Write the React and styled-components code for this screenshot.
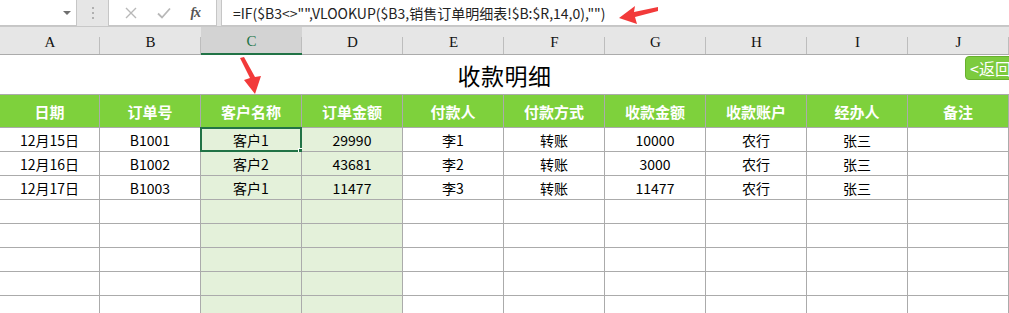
import React from "react";
import styled, { createGlobalStyle } from "styled-components";

const GlobalStyle = createGlobalStyle`
  html, body {
    margin: 0;
    padding: 0;
    background: #ffffff;
  }
  body {
    width: 1009px;
    height: 313px;
    overflow: hidden;
    font-family: "Noto Sans CJK SC", "Noto Sans", sans-serif;
  }
`;

const Page = styled.div`
  position: relative;
  width: 1009px;
  height: 313px;
  overflow: hidden;
`;

const FormulaBar = styled.div`
  display: flex;
  align-items: stretch;
  height: 27px;
  background: #e6e6e6;
  border-bottom: 1px solid #c8c8c8;
  box-sizing: border-box;
`;

const NameBox = styled.div`
  width: 77px;
  background: #fff;
  border: 1px solid #c6c6c6;
  border-left: none;
  border-top: none;
  box-sizing: border-box;
  display: flex;
  align-items: center;
  justify-content: flex-end;
  padding-right: 5px;
`;

const DropArrow = styled.span`
  width: 0;
  height: 0;
  border-left: 4px solid transparent;
  border-right: 4px solid transparent;
  border-top: 4px solid #6f6f6f;
`;

const Grip = styled.div`
  width: 31px;
  display: flex;
  flex-direction: column;
  align-items: center;
  justify-content: center;
  gap: 3px;
  & > i {
    width: 2px;
    height: 2px;
    background: #b0b0b0;
  }
`;

const ButtonBox = styled.div`
  width: 109px;
  background: #fff;
  border: 1px solid #c6c6c6;
  border-top: none;
  box-sizing: border-box;
  display: flex;
  align-items: center;
  justify-content: space-around;
  padding: 0 6px;
`;

const Fx = styled.span`
  font-family: "Liberation Serif", serif;
  font-style: italic;
  font-weight: bold;
  font-size: 14px;
  color: #555;
  letter-spacing: -1px;
`;

const FormulaInput = styled.div`
  flex: 1;
  margin-left: 4px;
  background: #fff;
  border: 1px solid #c6c6c6;
  border-right: none;
  border-top: none;
  box-sizing: border-box;
  display: flex;
  align-items: center;
  padding-left: 11px;
  font-size: 14px;
  color: #222;
  white-space: nowrap;
`;

const ColumnBar = styled.div`
  display: grid;
  grid-template-columns: 100px repeat(9, 101px);
  height: 27px;
  background: #e6e6e6;
  border-bottom: 1px solid #ababab;
  box-sizing: content-box;
`;

const ColLabel = styled.div`
  position: relative;
  display: flex;
  align-items: flex-end;
  justify-content: center;
  padding-bottom: 3px;
  box-sizing: border-box;
  font-family: "Liberation Serif", "DejaVu Serif", serif;
  font-size: 15px;
  color: ${(p) => (p.$active ? "#217346" : "#111")};
  background: ${(p) => (p.$active ? "#d3d3d3" : "transparent")};
  border-bottom: ${(p) => (p.$active ? "2px solid #217346" : "none")};
  margin-bottom: ${(p) => (p.$active ? "-1px" : "0")};
  &::after {
    content: "";
    position: absolute;
    right: 0;
    top: 10px;
    bottom: 0;
    width: 1px;
    background: #bdbdbd;
  }
`;

const TitleRow = styled.div`
  position: relative;
  height: 39px;
  display: flex;
  align-items: center;
  justify-content: center;
  border-bottom: 1px solid #ababab;
`;

const Title = styled.div`
  font-size: 23px;
  color: #000;
  letter-spacing: 0.5px;
`;

const BackButton = styled.div`
  position: absolute;
  left: 965px;
  top: 1px;
  width: 60px;
  height: 24px;
  background: #7ccb3e;
  border: 1px solid #68b02e;
  border-radius: 4px;
  box-sizing: border-box;
  color: #fff;
  font-size: 16px;
  line-height: 22px;
  padding-left: 4px;
  white-space: nowrap;
`;

const Grid = styled.div`
  display: grid;
  grid-template-columns: 100px repeat(9, 101px);
  grid-auto-rows: ${(p) => p.$rowHeight}px;
`;

const HeadCell = styled.div`
  background: #7ed13c;
  color: #fff;
  font-weight: bold;
  font-size: 15px;
  display: flex;
  align-items: center;
  justify-content: center;
  border-right: 1px solid #ababab;
  border-bottom: 1px solid #ababab;
  box-sizing: border-box;
`;

const Cell = styled.div`
  position: relative;
  background: ${(p) => (p.$tinted ? "#e4f1da" : "#fff")};
  color: #000;
  font-size: 14px;
  display: flex;
  align-items: center;
  justify-content: center;
  border-right: 1px solid #ababab;
  border-bottom: 1px solid #ababab;
  box-sizing: border-box;
  ${(p) =>
    p.$selected &&
    `
    &::before {
      content: "";
      position: absolute;
      left: -1px;
      top: -1px;
      right: -1px;
      bottom: -1px;
      border: 2px solid #217346;
      pointer-events: none;
    }
    &::after {
      content: "";
      position: absolute;
      right: -4px;
      bottom: -4px;
      width: 5px;
      height: 5px;
      background: #217346;
      border: 1px solid #fff;
    }
  `}
`;

const Arrow = styled.svg`
  position: absolute;
  left: ${(p) => p.$x}px;
  top: ${(p) => p.$y}px;
`;

const columns = ["A", "B", "C", "D", "E", "F", "G", "H", "I", "J"];
const headers = ["日期", "订单号", "客户名称", "订单金额", "付款人", "付款方式", "收款金额", "收款账户", "经办人", "备注"];
const rows = [
  ["12月15日", "B1001", "客户1", "29990", "李1", "转账", "10000", "农行", "张三", ""],
  ["12月16日", "B1002", "客户2", "43681", "李2", "转账", "3000", "农行", "张三", ""],
  ["12月17日", "B1003", "客户1", "11477", "李3", "转账", "11477", "农行", "张三", ""],
];
const emptyRows = 5;

export default function App() {
  const allRows = [...rows, ...Array.from({ length: emptyRows }, () => Array(10).fill(""))];

  return (
    <Page>
      <GlobalStyle />
      <FormulaBar>
        <NameBox>
          <DropArrow />
        </NameBox>
        <Grip>
          <i />
          <i />
          <i />
        </Grip>
        <ButtonBox>
          <svg width="12" height="12" viewBox="0 0 12 12">
            <path d="M1 1L11 11M11 1L1 11" stroke="#b8b8b8" strokeWidth="1.4" fill="none" />
          </svg>
          <svg width="14" height="12" viewBox="0 0 14 12">
            <path d="M1 6.5L5 10.5L13 1.5" stroke="#b8b8b8" strokeWidth="1.8" fill="none" />
          </svg>
          <Fx>fx</Fx>
        </ButtonBox>
        <FormulaInput>=IF($B3&lt;&gt;"",VLOOKUP($B3,销售订单明细表!$B:$R,14,0),"")</FormulaInput>
      </FormulaBar>

      <ColumnBar>
        {columns.map((c) => (
          <ColLabel key={c} $active={c === "C"}>
            {c}
          </ColLabel>
        ))}
      </ColumnBar>

      <TitleRow>
        <Title>收款明细</Title>
        <BackButton>&lt;返回</BackButton>
      </TitleRow>

      <Grid $rowHeight={33}>
        {headers.map((h) => (
          <HeadCell key={h}>{h}</HeadCell>
        ))}
      </Grid>

      <Grid $rowHeight={24}>
        {allRows.map((r, ri) =>
          r.map((v, ci) => (
            <Cell key={ri + "-" + ci} $tinted={ci === 2 || ci === 3} $selected={ri === 0 && ci === 2}>
              {v}
            </Cell>
          ))
        )}
      </Grid>

      <Arrow $x={616} $y={3} width="44" height="22" viewBox="0 0 44 22">
        <path d="M3 15L19 3L18 9L42 4L42 8L19 14L21 21Z" fill="#f23a3a" />
      </Arrow>
      <Arrow $x={236} $y={56} width="28" height="40" viewBox="0 0 28 40">
        <path d="M4 2L14 22L8 24L19 38L25 20L19 21L8 1Z" fill="#f23a3a" />
      </Arrow>
    </Page>
  );
}
